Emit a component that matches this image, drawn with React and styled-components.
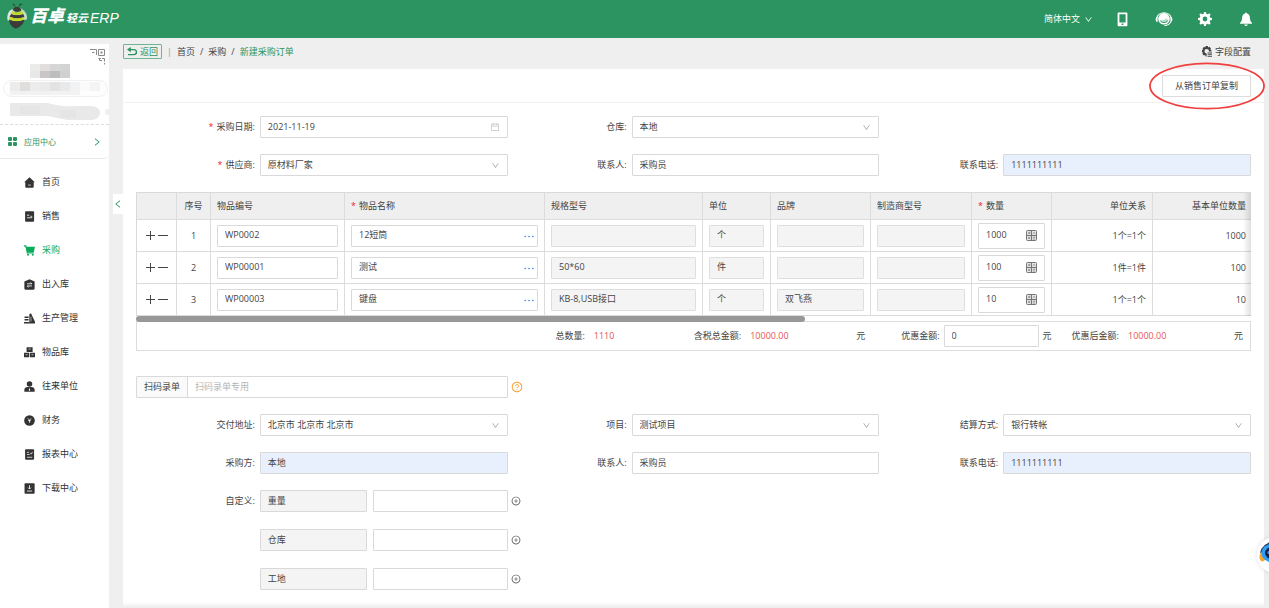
import React, { useId } from "react";
import styled, { createGlobalStyle } from "styled-components";
import {
  AiOutlineCalendar,
  AiOutlineDown,
  AiOutlineLeft,
  AiOutlinePlusCircle,
  AiOutlineQuestionCircle,
  AiOutlineRight,
} from "react-icons/ai";

const navItems = [
  { name: "首页", icon: "home" },
  { name: "销售", icon: "sale" },
  { name: "采购", icon: "cart", active: true },
  { name: "出入库", icon: "stock" },
  { name: "生产管理", icon: "factory" },
  { name: "物品库", icon: "goods" },
  { name: "往来单位", icon: "partner" },
  { name: "财务", icon: "finance" },
  { name: "报表中心", icon: "report" },
  { name: "下载中心", icon: "download" },
];

const rows = [
  { code: "WP0002", name: "12短筒", spec: "", unit: "个", brand: "", qty: "1000" },
  { code: "WP00001", name: "测试", spec: "50*60", unit: "件", brand: "", qty: "100" },
  { code: "WP00003", name: "键盘", spec: "KB-8,USB接口", unit: "个", brand: "双飞燕", qty: "10" },
];

const mosaic = [
  [30, 20, "#ebebeb"], [40, 20, "#e2dedd"], [50, 20, "#d6d6d6"], [60, 20, "#d2d3d4"],
  [30, 27, "#e8e8e8"], [40, 27, "#cbc6c6"], [50, 27, "#bcbebd"], [60, 27, "#d0d0d1"],
];

const mosaicName = [
  "#ececec", "#e0dddd", "#ececec", "#eaeaea", "#e3e3e4", "#e9e9e9", "#f1f2f4", "#fafafa", "#f4f4f5",
];

const NavIcon = ({ type }) => {
  switch (type) {
    case "home":
      return (
        <Glyph viewBox="0 0 12 12">
          <path d="M6 .2 11.8 5.6H10.6V10.6Q10.6 11.6 9.6 11.6H2.4Q1.4 11.6 1.4 10.6V5.6H.2Z" />
          <path d="M4.6 8.8H7.4" stroke="#fff" strokeWidth=".8" />
        </Glyph>
      );
    case "sale":
      return (
        <Glyph viewBox="0 0 12 12">
          <rect x="1.2" y=".4" width="9.8" height="11.2" rx="1" />
          <path d="M3.2 4.6H5.8M3.2 7.4H9M7 5.8H9" stroke="#fff" strokeWidth=".9" />
        </Glyph>
      );
    case "cart":
      return (
        <Glyph viewBox="0 0 12 12">
          <path d="M0 1H2L3.6 8.6H10.6" fill="none" stroke="currentColor" strokeWidth="1.2" />
          <path d="M2 2H12L10.8 7.6H3.4Z" />
          <circle cx="4.4" cy="10.6" r="1.1" />
          <circle cx="9.6" cy="10.6" r="1.1" />
        </Glyph>
      );
    case "stock":
      return (
        <Glyph viewBox="0 0 12 12">
          <path d="M6 .2 11.6 2.8V10.4Q11.6 11.6 10.4 11.6H1.6Q.4 11.6.4 10.4V2.8Z" />
          <path d="M3.4 5.2H8.6L7 3.8M8.6 7.6H3.4L5 9" fill="none" stroke="#fff" strokeWidth=".9" />
        </Glyph>
      );
    case "factory":
      return (
        <Glyph viewBox="0 0 12 12">
          <path d="M5.8 11.4V1.4L7.6.4 12 9.6V11.4Z" />
          <path d="M.6 4.6H5M.6 7.4H5M0 10.6H6" stroke="currentColor" strokeWidth="1.6" />
          <path d="M7.6 4V9.4" stroke="#fff" strokeWidth=".6" />
        </Glyph>
      );
    case "goods":
      return (
        <Glyph viewBox="0 0 12 12">
          <path d="M2.8.4H9.4V5.4H2.8ZM0 6.2H5.6V11.2H0ZM6.4 6.2H12V11.2H6.4Z" />
          <path d="M5 2.2H7.2M1.8 8.4H3.8M8.2 8.4H10.2" stroke="#fff" strokeWidth=".7" />
        </Glyph>
      );
    case "partner":
      return (
        <Glyph viewBox="0 0 12 12">
          <circle cx="6" cy="3.2" r="3" />
          <path d="M.4 11.6V9.6Q.4 7 4.2 6.6H7.8Q11.6 7 11.6 9.6V11.6Z" />
          <path d="M6 7 5.2 10 6 11 6.8 10Z" fill="#fff" />
        </Glyph>
      );
    case "finance":
      return (
        <Glyph viewBox="0 0 12 12">
          <circle cx="6" cy="6" r="5.8" />
          <path d="M4.2 3.6 6 5.8 7.8 3.6M4.4 6.2H7.6M6 5.6V8.6" fill="none" stroke="#fff" strokeWidth=".8" />
        </Glyph>
      );
    case "report":
      return (
        <Glyph viewBox="0 0 12 12">
          <rect x="1.2" y=".4" width="9.8" height="11.2" rx="1" />
          <path d="M3.2 3.6H5.6M3.2 6H5.6M3.2 9H9M6 6.2 7.4 4.8 8 5.6 9.2 3.2" fill="none" stroke="#fff" strokeWidth=".8" />
        </Glyph>
      );
    default:
      return (
        <Glyph viewBox="0 0 12 12">
          <rect x=".6" y=".4" width="11" height="11.2" rx="1" />
          <path d="M6 2.4V6.4M4.4 5 6 6.6 7.6 5M3.2 8.8H8.8" fill="none" stroke="#fff" strokeWidth=".9" />
        </Glyph>
      );
  }
};

const BeeLogo = () => (
  <svg width="20" height="26" viewBox="0 0 60 78" aria-hidden="true">
    <path d="M25 12 20 5M36 11 40 4M17 4H23M37 4H46" stroke="#2c3a2c" strokeWidth="2.5" fill="none" />
    <path d="M22 18C8 18 0 30 1 48C1 52 4 54 8 52L24 40Z" fill="#d8e6df" />
    <path d="M38 16C52 20 60 32 60 44C60 50 56 52 50 50L36 38Z" fill="#c5dcd0" />
    <path d="M17 22Q20 11 31 11Q42 12 43 23Q30 29 17 22Z" fill="#3d3a3a" />
    <path d="M15 25Q30 31 45 23L49 33Q30 40 12 33Z" fill="#c4d82d" />
    <path d="M12 33Q30 41 49 33L52 42Q30 50 8 41Z" fill="#3d3a3a" />
    <path d="M8 41Q30 50 52 42V50Q30 60 6 50Z" fill="#c4d82d" />
    <path d="M6 50Q30 60 52 50Q48 70 26 77Q8 70 6 50Z" fill="#3d3a3a" />
  </svg>
);

const HeadsetIcon = () => (
  <svg width="18" height="16" viewBox="0 0 18 16" aria-hidden="true">
    <path d="M1.8 7A7.3 6.2 0 0 1 16.2 7" fill="none" stroke="#fff" strokeWidth="1.1" />
    <circle cx="9" cy="7.8" r="5.8" fill="#fff" />
    <path d="M2.6 5.6V11.2Q.6 10.8.6 8.4Q.6 6 2.6 5.6ZM15.4 5.6V11.2Q17.4 10.8 17.4 8.4Q17.4 6 15.4 5.6Z" fill="#fff" />
    <path d="M4.8 9Q9 10 11.6 7.2Q12.4 9 13.6 9.4Q12 12 9 12Q6 12 4.8 9Z" fill="#2b9461" opacity=".35" />
    <path d="M5.4 10Q9 13.4 12.8 9.8" fill="none" stroke="#2b9461" strokeWidth=".9" />
    <path d="M15.8 11Q14 14.4 9.4 14.6" fill="none" stroke="#fff" strokeWidth="1.1" />
  </svg>
);

const PhoneIcon = () => (
  <svg width="11" height="15" viewBox="0 0 11 15" aria-hidden="true">
    <path
      d="M1.4.4H9.6Q10.4.4 10.4 1.2V13.4Q10.4 14.2 9.6 14.2H1.4Q.6 14.2.6 13.4V1.2Q.6.4 1.4.4ZM2.4 2.2V10.4H8.6V2.2ZM4.6 11.4V13H6.4V11.4Z"
      fill="#fff"
      fillRule="evenodd"
    />
  </svg>
);

const GearIcon = () => (
  <svg width="14" height="14" viewBox="0 0 14 14" aria-hidden="true">
    <circle cx="7" cy="7" r="3.9" fill="none" stroke="currentColor" strokeWidth="3" />
    {[0, 45, 90, 135].map((angle) => (
      <path
        key={angle}
        d="M5.6 2.6 6 0H8L8.4 2.6ZM5.6 11.4 6 14H8L8.4 11.4Z"
        fill="currentColor"
        transform={`rotate(${angle} 7 7)`}
      />
    ))}
  </svg>
);

const FieldGearIcon = () => (
  <svg width="10" height="11" viewBox="0 0 10 11" fill="currentColor" aria-hidden="true">
    <path d="M3.6 0H5.8L6.2 1.4 7.4.8 9 2.6 8.4 3.8 9.6 4.4V5.6H7A2.3 2.3 0 1 0 4.6 7.6V10.4H3.6L3.2 9 1.8 9.6.4 7.8 1 6.6 0 6.2V4L1.2 3.6.6 2.4 2 .8 3.2 1.4Z" />
    <path d="M5.6 6.4H10V7.6H5.6ZM5.6 8.2H10V9H5.6ZM5.6 9.8H10V10.8H5.6Z" />
  </svg>
);

const BellIcon = () => (
  <svg width="12" height="15" viewBox="0 0 12 15" fill="currentColor" aria-hidden="true">
    <path d="M6 .4Q6.9.4 6.9 1.6Q9.8 2.4 9.9 6Q9.9 9.2 12 11V11.8H0V11Q2.1 9.2 2.1 6Q2.2 2.4 5.1 1.6Q5.1.4 6 .4ZM4.2 12.4H7.8Q7.4 14 6 14Q4.6 14 4.2 12.4Z" />
  </svg>
);

const BackIcon = () => (
  <svg width="10" height="9" viewBox="0 0 10 9" aria-hidden="true">
    <path d="M1.4 2.6H7A2.4 2.4 0 0 1 7 7.6H1" fill="none" stroke="currentColor" strokeWidth="1.4" />
    <path d="M0 2.6 3.8 0V5.2Z" fill="currentColor" />
  </svg>
);

const CalcIcon = () => (
  <svg width="11" height="11" viewBox="0 0 11 11" fill="none" stroke="#757575" aria-hidden="true">
    <rect x=".5" y=".5" width="10" height="10" rx="1" fill="#e4e4e4" />
    <path d="M5.5.5V10.5M.5 5.5H10.5" />
    <path d="M2 3H4.4M3.2 1.8V4.2M6.8 3H9.2M2.2 7 4.2 9M4.2 7 2.2 9M6.8 7.2H9.2M6.8 9H9.2" strokeWidth=".7" />
  </svg>
);

const QrIcon = () => (
  <svg width="17" height="17" viewBox="0 0 17 17" aria-hidden="true">
    <path d="M1 1.5H7.5V7M3 4.5H5.5M9.5 1.5H15.5V7.5H9.5ZM9.5 10.5H12M10.5 10V12.5H13M13 10.5H15.5V13.5M15.5 15V16.5" fill="none" stroke="#8a8a8a" />
    <rect x="11.5" y="3.5" width="2" height="2" fill="#8a8a8a" />
  </svg>
);

const Field = ({ label, required, value, type = "text", fill }) => {
  const id = useId();
  return (
    <FieldRow>
      <FieldLabel htmlFor={id}>
        {required && <Star>*</Star>}
        {label}:
      </FieldLabel>
      <Control $fill={fill}>
        {type === "select" ? (
          <BareSelect id={id} defaultValue={value}>
            <option>{value}</option>
          </BareSelect>
        ) : (
          <BareInput id={id} defaultValue={value} />
        )}
        {type === "select" && <AiOutlineDown size={9} color="#a6a6a6" />}
        {type === "date" && <AiOutlineCalendar size={10} color="#c4c4c4" />}
      </Control>
    </FieldRow>
  );
};

const CustomField = ({ label, name }) => (
  <FieldRow>
    <FieldLabel as="span">{label && `${label}:`}</FieldLabel>
    <CustomPair>
      <Control $fill="#f4f4f4">
        <BareInput aria-label="自定义名称" defaultValue={name} readOnly />
      </Control>
      <Control>
        <BareInput aria-label={name} />
      </Control>
    </CustomPair>
    <SideButton aria-label="添加">
      <AiOutlinePlusCircle size={10} />
    </SideButton>
  </FieldRow>
);

const Cell = ({ label, value, disabled }) => (
  <td>
    <Control $fill={disabled && "#f4f4f4"} $edge={disabled && "#dedede"}>
      <BareInput aria-label={label} defaultValue={value} readOnly={disabled} />
    </Control>
  </td>
);

const App = () => {
  return (
    <Page>
      <GlobalStyle />
      <Header>
        <Brand>
          <BeeLogo />
          <BrandMain>百卓</BrandMain>
          <BrandSub>轻云</BrandSub>
          <BrandErp>ERP</BrandErp>
        </Brand>
        <HeaderTools>
          <Language>
            简体中文 <AiOutlineDown size={9} />
          </Language>
          <HeaderButton aria-label="手机端"><PhoneIcon /></HeaderButton>
          <HeaderButton aria-label="客服"><HeadsetIcon /></HeaderButton>
          <HeaderButton aria-label="设置"><GearIcon /></HeaderButton>
          <HeaderButton aria-label="通知"><BellIcon /></HeaderButton>
        </HeaderTools>
      </Header>

      <Body>
        <Sidebar>
          <UserCard>
            <QrBox><QrIcon /></QrBox>
            <svg width="109" height="80" viewBox="0 0 109 80" aria-hidden="true">
              {mosaic.map(([x, y, c]) => (
                <rect key={`${x}-${y}`} x={x} y={y} width="10" height="7" fill={c} />
              ))}
              <rect x="3.5" y="36.5" width="104" height="16" rx="8" fill="#fdfdfd" stroke="#f1f1f1" />
              {mosaicName.map((c, i) => (
                <rect key={i} x={10 + i * 10} y="38" width="10" height="9" fill={c} />
              ))}
              <path d="M10 47H80V51H10Z" fill="#f2f2f2" />
              <path d="M10 59H48Q62 63 74 62H90Q100 62 100 69Q99 77 88 76H68Q56 74 48 72H10Z" fill="#e9e9e9" />
              <path d="M20 62H40V70H20ZM60 66H76V74H60Z" fill="#e5e5e5" />
              <circle cx="108" cy="68" r="3" fill="#efefef" />
            </svg>
          </UserCard>
          <AppCenter href="#apps">
            <svg width="9" height="9" viewBox="0 0 9 9" fill="#2b9461" aria-hidden="true">
              <rect width="4" height="4" rx="1" />
              <rect x="5" width="4" height="4" rx="1" />
              <rect y="5" width="4" height="4" rx="1" />
              <rect x="5" y="5" width="4" height="4" rx="1" />
            </svg>
            <span>应用中心</span>
            <AiOutlineRight size={10} />
          </AppCenter>
          <Nav>
            {navItems.map((item) => (
              <NavLink key={item.name} href={`#${item.icon}`} $active={item.active}>
                <NavIcon type={item.icon} />
                {item.name}
              </NavLink>
            ))}
          </Nav>
        </Sidebar>

        <Gutter>
          <Collapse aria-label="收起菜单">
            <AiOutlineLeft size={10} />
          </Collapse>
        </Gutter>

        <Main>
          <TopLine>
            <BackButton>
              <BackIcon />
              返回
            </BackButton>
            <Divider>|</Divider>
            <Crumbs>
              <a href="#home">首页</a>
              <span>/</span>
              <a href="#cart">采购</a>
              <span>/</span>
              <Current>新建采购订单</Current>
            </Crumbs>
            <ConfigButton>
              <FieldGearIcon />
              字段配置
            </ConfigButton>
          </TopLine>

          <Panel>
            <ActionBar>
              <CopyButton>
                从销售订单复制
                <Ring viewBox="0 0 116 48" aria-hidden="true">
                  <ellipse cx="58" cy="24" rx="57" ry="22.6" fill="none" stroke="#f04040" strokeWidth="1.8" />
                </Ring>
              </CopyButton>
            </ActionBar>

            <Content>
              <FormGrid>
                <Field label="采购日期" required type="date" value="2021-11-19" />
                <Field label="仓库" type="select" value="本地" />
                <span />
                <Field label="供应商" required type="select" value="原材料厂家" />
                <Field label="联系人" value="采购员" />
                <Field label="联系电话" value="1111111111" fill="#e8f0fe" />
              </FormGrid>

              <TableBox>
                <ItemTable>
                  <colgroup>
                    {[40, 34, 134, 200, 158, 68, 100, 101, 80, 101].map((w, i) => (
                      <Col key={i} $w={w} />
                    ))}
                    <col />
                  </colgroup>
                  <thead>
                    <tr>
                      <th aria-label="操作" />
                      <Th $align="center">序号</Th>
                      <Th>物品编号</Th>
                      <Th><Star>*</Star>物品名称</Th>
                      <Th>规格型号</Th>
                      <Th>单位</Th>
                      <Th>品牌</Th>
                      <Th>制造商型号</Th>
                      <Th><Star>*</Star>数量</Th>
                      <Th $align="right">单位关系</Th>
                      <Th $align="right">基本单位数量</Th>
                    </tr>
                  </thead>
                  <tbody>
                    {rows.map((row, i) => (
                      <tr key={row.code}>
                        <td>
                          <RowTools>
                            <IconButton aria-label="增加一行">
                              <svg width="10" height="10" viewBox="0 0 10 10"><path d="M0 4.5H9M4.5 0V9" stroke="#444" /></svg>
                            </IconButton>
                            <IconButton aria-label="删除一行">
                              <svg width="10" height="10" viewBox="0 0 10 10"><path d="M0 4.5H10" stroke="#444" /></svg>
                            </IconButton>
                          </RowTools>
                        </td>
                        <Td $align="center">{i + 1}</Td>
                        <Cell label="物品编号" value={row.code} />
                        <td>
                          <Control $tight>
                            <BareInput aria-label="物品名称" defaultValue={row.name} />
                            <IconButton aria-label="选择物品">
                              <svg width="10" height="4" viewBox="0 0 10 4" fill="#2f7fe0">
                                <circle cx="1.2" cy="2.5" r=".8" />
                                <circle cx="5" cy="2.5" r=".8" />
                                <circle cx="8.8" cy="2.5" r=".8" />
                              </svg>
                            </IconButton>
                          </Control>
                        </td>
                        <Cell label="规格型号" value={row.spec} disabled />
                        <Cell label="单位" value={row.unit} disabled />
                        <Cell label="品牌" value={row.brand} disabled />
                        <Cell label="制造商型号" value="" disabled />
                        <td>
                          <Control $tall>
                            <BareInput aria-label="数量" defaultValue={row.qty} />
                            <IconButton aria-label="计算"><CalcIcon /></IconButton>
                          </Control>
                        </td>
                        <Td $align="right">{`1${row.unit}=1${row.unit}`}</Td>
                        <Td $align="right">{row.qty}</Td>
                      </tr>
                    ))}
                  </tbody>
                </ItemTable>
                <EdgeShade />
              </TableBox>
              <ScrollTrack>
                <ScrollThumb />
              </ScrollTrack>
              <Summary>
                <span>总数量:</span>
                <Amount $width={100}>1110</Amount>
                <span>含税总金额:</span>
                <Amount>10000.00</Amount>
                <Yuan $wide>元</Yuan>
                <label htmlFor="discount">优惠金额:</label>
                <Discount>
                  <BareInput id="discount" defaultValue="0" />
                </Discount>
                <Yuan>元</Yuan>
                <span>优惠后金额:</span>
                <Amount>10000.00</Amount>
                <span>元</span>
              </Summary>

              <ScanRow>
                <ScanBox>
                  <ScanLabel htmlFor="scan">扫码录单</ScanLabel>
                  <BareInput id="scan" placeholder="扫码录单专用" />
                </ScanBox>
                <SideButton aria-label="帮助" $color="#fa9a2b">
                  <AiOutlineQuestionCircle size={12} />
                </SideButton>
              </ScanRow>

              <FormGrid>
                <Field label="交付地址" type="select" value="北京市 北京市 北京市" />
                <Field label="项目" type="select" value="测试项目" />
                <Field label="结算方式" type="select" value="银行转帐" />
                <Field label="采购方" value="本地" fill="#e8f0fe" />
                <Field label="联系人" value="采购员" />
                <Field label="联系电话" value="1111111111" fill="#e8f0fe" />
                <CustomColumn>
                  <CustomField label="自定义" name="重量" />
                  <CustomField name="仓库" />
                  <CustomField name="工地" />
                </CustomColumn>
              </FormGrid>
            </Content>
            <FootShade />
          </Panel>
        </Main>
      </Body>

      <Assistant aria-label="智能助手">
        <svg width="36" height="36" viewBox="0 0 36 36" aria-hidden="true">
          <path d="M3 16Q5 6 18 4V12Z" fill="#2b3350" />
          <ellipse cx="5.5" cy="20" rx="3" ry="4.4" fill="#f7a52b" />
          <ellipse cx="16" cy="16" rx="11.5" ry="9.5" fill="#2f9df4" />
          <ellipse cx="16" cy="16" rx="8" ry="6.5" fill="#1b2340" />
          <circle cx="12" cy="15.5" r="1.6" fill="#5b8cff" />
        </svg>
      </Assistant>
    </Page>
  );
};

export default App;

const GlobalStyle = createGlobalStyle`
  * {
    box-sizing: border-box;
  }

  body {
    margin: 0;
    overflow-x: hidden;
    background: #efefef;
    color: #444;
    font: 9px/14px "Open Sans", "Noto Sans CJK SC", sans-serif;
  }

  button, input, select {
    font: inherit;
    color: inherit;
  }

  button {
    padding: 0;
    border: 0;
    background: none;
    cursor: pointer;
  }

  a {
    color: inherit;
    text-decoration: none;
  }

  svg {
    flex: none;
    display: block;
  }
`;

const Page = styled.div`
  display: flex;
  flex-direction: column;
  min-height: 100vh;
`;

const Header = styled.header`
  display: flex;
  justify-content: space-between;
  align-items: center;
  height: 38px;
  padding: 0 12px 0 7px;
  background: #2b9461;
  color: #fff;
`;

const Brand = styled.div`
  display: flex;
  align-items: center;
  padding-bottom: 6px;
`;

const BrandMain = styled.strong`
  margin: 0 2px 0 3px;
  font-size: 17px;
  font-weight: 900;
  font-style: italic;
`;

const BrandSub = styled.span`
  padding-top: 4px;
  font-size: 11px;
  font-weight: 700;
  font-style: italic;
`;

const BrandErp = styled.span`
  padding: 4px 0 0 2px;
  font-family: "Liberation Sans", sans-serif;
  font-size: 14px;
  font-style: italic;
`;

const HeaderTools = styled.div`
  display: flex;
  align-items: center;
  gap: 18px;
`;

const HeaderButton = styled.button`
  display: flex;
  justify-content: center;
  width: 23px;
`;

const Language = styled.button`
  display: flex;
  align-items: center;
  gap: 4px;
`;

const Body = styled.div`
  display: flex;
  flex: 1;
`;

const Sidebar = styled.aside`
  width: 109px;
  margin-top: 6px;
  background: #fff;
`;

const UserCard = styled.div`
  display: grid;
  border-bottom: 1px dashed #ddd;

  > * {
    grid-area: 1 / 1;
  }
`;

const QrBox = styled.div`
  justify-self: end;
  padding: 4px 3px;
`;

const AppCenter = styled.a`
  display: flex;
  align-items: center;
  gap: 7px;
  height: 34px;
  padding: 0 7px 0 8px;
  border-bottom: 1px solid #e8e8e8;
  border-radius: 0 0 5px 0;
  color: #2b9461;
  font-size: 8px;

  span {
    flex: 1;
  }
`;

const Nav = styled.nav`
  display: flex;
  flex-direction: column;
  padding-top: 6px;
`;

const NavLink = styled.a`
  display: flex;
  align-items: center;
  gap: 7px;
  height: 34px;
  padding-left: 24px;
  color: ${({ $active }) => ($active ? "#0aac5c" : "#333")};
`;

const Glyph = styled.svg`
  width: 11px;
  height: 11px;
  fill: currentColor;
`;

const Gutter = styled.div`
  display: flex;
  justify-content: flex-end;
  align-items: flex-start;
  width: 14px;
`;

const Collapse = styled.button`
  display: flex;
  align-items: center;
  width: 10px;
  height: 20px;
  margin-top: 156px;
  background: #fff;
  color: #2b9461;
`;

const Main = styled.main`
  display: flex;
  flex-direction: column;
  flex: 1;
  min-width: 0;
  padding-right: 5px;
`;

const TopLine = styled.div`
  display: flex;
  align-items: center;
  height: 31px;
  padding: 0 13px 4px 0;
`;

const BackButton = styled.button`
  display: flex;
  align-items: center;
  gap: 3px;
  height: 15px;
  padding: 0 3px;
  border: 1px solid #6fb593;
  border-radius: 1px;
  color: #2b9461;
`;

const Divider = styled.span`
  margin: 0 5px;
  color: #999;
`;

const Crumbs = styled.nav`
  display: flex;
  flex: 1;
  gap: 5px;
`;

const Current = styled.span`
  color: #2b9461;
`;

const ConfigButton = styled.button`
  display: flex;
  align-items: center;
  gap: 3px;
`;

const Panel = styled.section`
  display: flex;
  flex-direction: column;
  flex: 1;
  background: #fff;
`;

const ActionBar = styled.div`
  display: flex;
  justify-content: flex-end;
  align-items: center;
  height: 34px;
  padding-right: 13px;
  border-bottom: 1px solid #f2f2f2;
`;

const CopyButton = styled.button`
  position: relative;
  height: 22px;
  padding: 0 12px;
  border: 1px solid #ddd;
`;

const Ring = styled.svg`
  position: absolute;
  top: -14px;
  left: -14px;
  width: 116px;
  height: 48px;
  pointer-events: none;
`;

const Content = styled.div`
  flex: 1;
  padding: 13px 13px 10px;
`;

const FormGrid = styled.div`
  display: grid;
  grid-template-columns: repeat(3, 1fr);
  row-gap: 16px;
`;

const FieldRow = styled.div`
  display: flex;
  align-items: center;
`;

const FieldLabel = styled.label`
  flex: none;
  width: 33.33%;
  padding-right: 5px;
  text-align: right;
`;

const Star = styled.span`
  margin-right: 3px;
  color: #f5222d;
`;

const Control = styled.div`
  display: flex;
  align-items: center;
  flex: 1;
  min-width: 0;
  height: ${({ $tall }) => ($tall ? 26 : 22)}px;
  padding-right: ${({ $tight }) => ($tight ? 3 : 7)}px;
  border: 1px solid ${({ $edge }) => $edge || "#d9d9d9"};
  border-radius: 1px;
  background: ${({ $fill }) => $fill || "#fff"};
`;

const BareInput = styled.input`
  flex: 1;
  width: 100%;
  min-width: 0;
  height: 20px;
  padding: 0 0 2px 7px;
  border: 0;
  outline: 0;
  background: transparent;

  &::placeholder {
    color: #b5b5b5;
  }
`;

const BareSelect = styled.select`
  flex: 1;
  min-width: 0;
  height: 20px;
  padding: 0 0 0 7px;
  border: 0;
  outline: 0;
  background: transparent;
  appearance: none;
`;

const CustomColumn = styled.div`
  display: flex;
  flex-direction: column;
  gap: 17px;
`;

const CustomPair = styled.div`
  display: grid;
  flex: 1;
  grid-template-columns: 107px 1fr;
  gap: 6px;
`;

const SideButton = styled.button`
  display: flex;
  width: 12px;
  margin: 0 -15px 0 3px;
  color: ${({ $color }) => $color || "#444"};
`;

const TableBox = styled.div`
  position: relative;
  margin-top: 16px;
  overflow: hidden;
  border: 1px solid #d9d9d9;
  border-width: 1px 0 0 1px;
`;

const ItemTable = styled.table`
  width: 100%;
  min-width: 1100px;
  table-layout: fixed;
  border-spacing: 0;

  th,
  td {
    padding: 0 6px;
    border-right: 1px solid #dcdcdc;
    border-bottom: 1px solid #dcdcdc;
    font-weight: 400;
  }

  th:last-child,
  td:last-child {
    padding-right: 5px;
    border-right: 0;
  }

  th {
    height: 27px;
    background: #efefef;
  }

  td {
    height: 32px;
  }
`;

const Col = styled.col`
  width: ${({ $w }) => $w}px;
`;

const Th = styled.th`
  text-align: ${({ $align }) => $align || "left"};
  white-space: nowrap;
`;

const Td = styled.td`
  text-align: ${({ $align }) => $align || "left"};
`;

const RowTools = styled.div`
  display: flex;
  justify-content: center;
  gap: 2px;
`;

const IconButton = styled.button`
  display: flex;
`;

const EdgeShade = styled.div`
  position: absolute;
  top: 0;
  right: 0;
  bottom: 0;
  width: 8px;
  background: linear-gradient(to left, rgba(0, 0, 0, 0.12), transparent);
  pointer-events: none;
`;

const ScrollTrack = styled.div`
  height: 6px;
  border-bottom: 1px solid #dcdcdc;
`;

const ScrollThumb = styled.div`
  width: 60%;
  height: 6px;
  border-radius: 3px;
  background: #989898;
`;

const Summary = styled.div`
  display: flex;
  justify-content: flex-end;
  align-items: center;
  height: 29px;
  padding-right: 7px;
  border: 1px solid #dcdcdc;
  border-top: 0;
`;

const Amount = styled.span`
  width: ${({ $width }) => $width || 106}px;
  margin-left: 9px;
  color: #e8535a;
  white-space: nowrap;
`;

const Yuan = styled.span`
  margin-right: ${({ $wide }) => ($wide ? 36 : 20)}px;
`;

const Discount = styled(Control)`
  flex: none;
  width: 95px;
  margin: 0 4px;
`;

const ScanRow = styled.div`
  display: flex;
  align-items: center;
  width: 33.33%;
  margin: 25px 0 16px;
`;

const ScanBox = styled(Control)`
  padding: 0;
`;

const ScanLabel = styled.label`
  height: 20px;
  padding: 3px 7px;
  border-right: 1px solid #d9d9d9;
  background: #fafafa;
  white-space: nowrap;
`;

const FootShade = styled.div`
  height: 6px;
  background: linear-gradient(to top, #ececec, #fff);
`;

const Assistant = styled.button`
  position: fixed;
  right: -24px;
  bottom: 35px;
  width: 36px;
  height: 36px;
  border-radius: 50%;
  background: #fff;
  box-shadow: 0 0 5px rgba(0, 0, 0, 0.12);
`;
